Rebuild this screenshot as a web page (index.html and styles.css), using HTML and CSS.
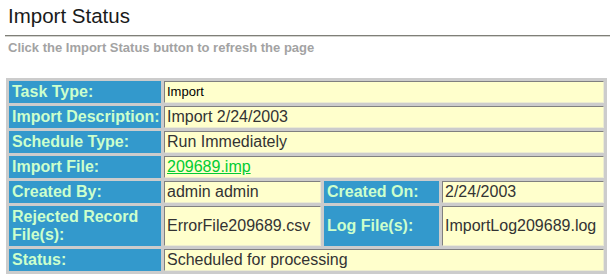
FILE: index.html
```html
<!DOCTYPE html>
<html lang="en">
<head>
    <meta charset="UTF-8">
    <title>Import Status</title>
    <link rel="stylesheet" href="styles.css">
</head>
<body>
    <h1 class="page-title">Import Status</h1>
    <div class="title-rule"></div>
    <p class="hint">Click the Import Status button to refresh the page</p>

    <table class="status-table">
        <colgroup>
            <col class="col-label">
            <col class="col-value">
            <col class="col-label2">
            <col class="col-value2">
        </colgroup>
        <tr>
            <td class="label">Task Type:</td>
            <td class="value small" colspan="3">Import</td>
        </tr>
        <tr>
            <td class="label">Import Description:</td>
            <td class="value" colspan="3">Import 2/24/2003</td>
        </tr>
        <tr>
            <td class="label">Schedule Type:</td>
            <td class="value" colspan="3">Run Immediately</td>
        </tr>
        <tr>
            <td class="label">Import File:</td>
            <td class="value" colspan="3"><a href="#">209689.imp</a></td>
        </tr>
        <tr>
            <td class="label">Created By:</td>
            <td class="value">admin admin</td>
            <td class="label">Created On:</td>
            <td class="value">2/24/2003</td>
        </tr>
        <tr>
            <td class="label">Rejected Record File(s):</td>
            <td class="value">ErrorFile209689.csv</td>
            <td class="label">Log File(s):</td>
            <td class="value">ImportLog209689.log</td>
        </tr>
        <tr>
            <td class="label">Status:</td>
            <td class="value" colspan="3">Scheduled for processing</td>
        </tr>
    </table>
</body>
</html>
```

FILE: styles.css
```css
body {
    margin: 0;
    background: #ffffff;
    font-family: "Liberation Sans", Arial, sans-serif;
}
.page-title {
    margin: 0;
    padding: 4px 8px 0;
    font-size: 20.5px;
    line-height: 24px;
    font-weight: normal;
    color: #1a1a1a;
}
.title-rule {
    margin: 7px 0 0 5px;
    border-top: 1px solid #7f7f78;
    border-bottom: 1px solid #d4d4d0;
}
.hint {
    margin: 3px 0 0;
    padding-left: 8px;
    font-size: 13px;
    line-height: 16px;
    font-weight: bold;
    color: #a3a3a3;
}
.status-table {
    margin: 22px 0 0 6px;
    width: 601px;
    table-layout: fixed;
    border-collapse: separate;
    border-spacing: 3px;
    background: #cccccc;
}
.col-label { width: 152px; }
.col-value { width: 157px; }
.col-label2 { width: 115px; }
.col-value2 { width: auto; }
.status-table td {
    font-size: 16px;
    line-height: 18px;
    vertical-align: middle;
}
.label {
    padding: 2px 1px 2px 3px;
    background: #3399cc;
    color: #ccffcc;
    font-weight: bold;
}
.value {
    padding: 1px 2px;
    background: #ffffcc;
    border: 1px solid;
    border-color: #808080 #ececd0 #ececd0 #808080;
    color: #333333;
}
.value.small {
    font-size: 13px;
    color: #000000;
}
.value a {
    color: #00cc33;
}
```
